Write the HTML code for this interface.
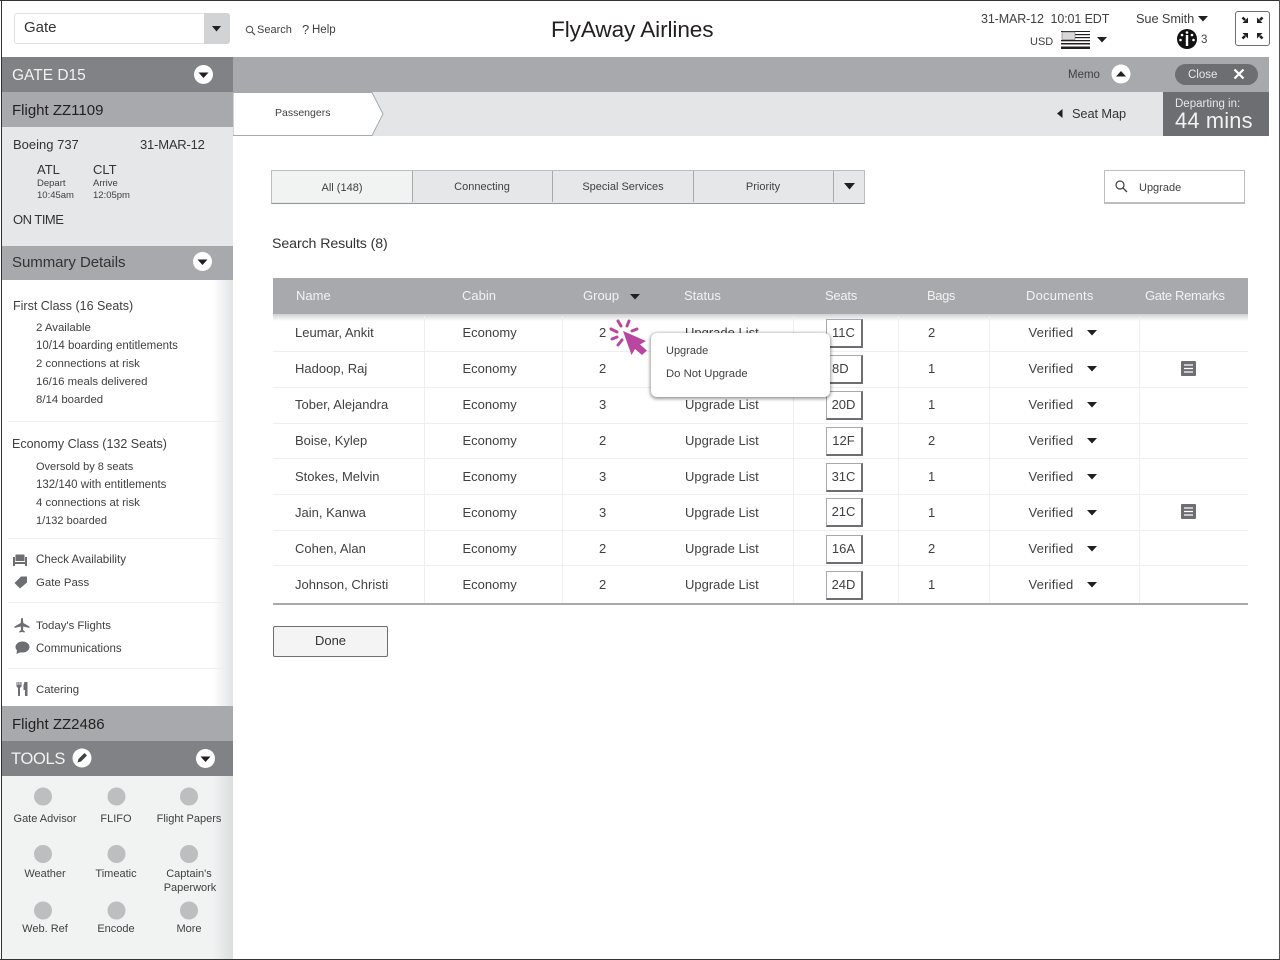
<!DOCTYPE html>
<html><head><meta charset="utf-8"><title>FlyAway Airlines</title>
<style>
html,body{margin:0;padding:0;background:#fff}
#p{position:relative;width:1280px;height:960px;overflow:hidden;background:#fff;font-family:"Liberation Sans",sans-serif;color:#414042;font-size:13px}
#p div,#p svg{position:absolute}
.t{white-space:nowrap;line-height:16px;height:16px}
.c{transform:translateX(-50%)}
.s{font-size:11px}
.m{font-size:11.400px}
.h{color:#f1f2f2;top:287.500px}
.l{background:#efeff0}
.b{width:34px;left:826px;height:26px;border:1px solid #a7a9ac;border-right:2px solid #6d6e71;border-bottom:2px solid #6d6e71;background:#fff;text-align:center;line-height:26px;text-indent:-1px}
</style></head><body><div id="p">
<!-- page backgrounds -->
<div style="left:2px;top:57px;width:231px;height:35px;background:#808285"></div>
<div style="left:2px;top:92px;width:231px;height:35px;background:#a7a9ac"></div>
<div style="left:2px;top:127px;width:231px;height:119px;background:#e6e7e8"></div>
<div style="left:2px;top:246px;width:231px;height:34px;background:#a7a9ac"></div>
<div style="left:213px;top:280px;width:20px;height:426px;background:linear-gradient(90deg,#fff,#e2e3e4)"></div>
<div style="left:2px;top:706px;width:231px;height:35px;background:#a7a9ac"></div>
<div style="left:2px;top:741px;width:231px;height:35px;background:#808285"></div>
<div style="left:2px;top:776px;width:231px;height:183px;background:#f1f2f2"></div>
<div style="left:213px;top:776px;width:20px;height:183px;background:linear-gradient(90deg,#f1f2f2,#dcddde)"></div>
<div style="left:233px;top:57px;width:1036px;height:35px;background:#a7a9ac"></div>
<div style="left:233px;top:92px;width:1036px;height:44px;background:#e4e5e6"></div>
<svg style="left:233px;top:92px" width="152" height="45"><path d="M0 .5H139L150 22 139 43.500H0Z" fill="#fff" stroke="#a7a9ac"/></svg>
<div style="left:1163px;top:92px;width:106px;height:44px;background:#6d6e71"></div>
<!-- page border -->
<div style="left:0;top:0;width:1280px;height:1px;background:#333"></div>
<div style="left:1px;top:0;width:1px;height:960px;background:#333"></div>
<div style="left:1279px;top:0;width:1px;height:960px;background:#555"></div>
<div style="left:0;top:959px;width:1280px;height:1px;background:#333"></div>

<!-- top bar -->
<div style="left:14px;top:13px;width:214px;height:29px;border:1px solid #e1e2e3;border-radius:3px;background:#fff"></div>
<div style="left:204px;top:13px;width:26px;height:31px;background:#d1d3d4;border-radius:0 3px 3px 0"></div>
<svg style="left:212px;top:26px" width="10" height="6"><path d="M0 0H9L4.500 5.500Z" fill="#231f20"/></svg>
<div class="t" style="left:24px;top:20px;font-size:15px;color:#333">Gate</div>
<svg style="left:245px;top:25px" width="11" height="11"><circle cx="4.500" cy="4.500" r="3.200" fill="none" stroke="#58595b" stroke-width="1.100"/><path d="M7 7L10 10" stroke="#58595b" stroke-width="1.300"/></svg>
<div class="t s" style="left:257px;top:22px">Search</div>
<div class="t" style="left:302px;top:22px;font-size:13px">?</div>
<div class="t" style="left:312px;top:22px;font-size:11.500px">Help</div>
<div class="t" style="left:551px;top:17.500px;font-size:22.600px;line-height:24px;height:24px;color:#231f20;letter-spacing:-.1px">FlyAway Airlines</div>
<div class="t" style="left:981px;top:11px;font-size:12.500px;letter-spacing:-.12px">31-MAR-12&nbsp; 10:01 EDT</div>
<div class="t" style="left:1136px;top:11px;font-size:12.800px;letter-spacing:-.1px">Sue Smith</div>
<svg style="left:1198px;top:16px" width="10" height="6"><path d="M0 0H10L5 5.500Z" fill="#231f20"/></svg>
<div class="t s" style="left:1030px;top:34px">USD</div>
<svg style="left:1061px;top:31px" width="29" height="18"><rect width="29" height="18" fill="#fff"/><g fill="#231f20"><rect y="0" width="29" height="1"/><rect x="14" y="3" width="15" height="1.200"/><rect x="14" y="6" width="15" height="1.200"/><rect y="9" width="29" height="1.300"/><rect y="12" width="29" height="1.500"/><rect y="15.500" width="29" height="2.500"/></g><rect x="1" y="1" width="13" height="7.500" fill="#d8d8d8" stroke="#777" stroke-width=".6"/></svg>
<svg style="left:1097px;top:37px" width="10" height="6"><path d="M0 0H10L5 5.500Z" fill="#231f20"/></svg>
<svg style="left:1177px;top:29px" width="20" height="20"><circle cx="10" cy="10" r="10" fill="#111"/><g fill="#fff"><rect x="8.800" y="6" width="2.400" height="11"/><circle cx="10" cy="3.500" r="1.300"/><circle cx="5" cy="6" r="1.300"/><circle cx="15" cy="6" r="1.300"/><circle cx="3.500" cy="11" r="1.300"/><circle cx="16.500" cy="11" r="1.300"/></g></svg>
<div class="t" style="left:1201px;top:32px;font-size:11.500px">3</div>
<div style="left:1235px;top:11px;width:33px;height:33px;border:1px solid #6d6e71;border-radius:3px;background:#fff"></div>
<svg style="left:1240px;top:15px" width="26" height="26" fill="#231f20" stroke="#231f20"><g stroke-width="2.500"><path d="M2.500 2.500L5 5M22.500 2.500L20 5M2.500 23.500L5 21M22.500 23.500L20 21"/></g><g stroke="none"><path d="M8 8H2.500L8 2.500Z"/><path d="M17 8H22.500L17 2.500Z"/><path d="M8 18H2.500L8 23.500Z"/><path d="M17 18H22.500L17 23.500Z"/></g></svg>

<!-- sidebar -->
<div class="t" style="left:12px;top:67.500px;font-size:15.500px;color:#f1f2f2">GATE D15</div>
<svg style="left:193px;top:64px" width="21" height="21"><circle cx="10.500" cy="10.500" r="9.500" fill="#fff"/><path d="M5.500 8.500H15.500L10.500 14Z" fill="#231f20"/></svg>
<div class="t" style="left:12px;top:102.500px;font-size:15px;color:#231f20">Flight ZZ1109</div>
<div class="t" style="left:13px;top:137px;color:#333">Boeing 737</div>
<div class="t" style="left:140px;top:137px;color:#333;letter-spacing:-.2px">31-MAR-12</div>
<div class="t" style="left:37px;top:162px;color:#333">ATL</div>
<div class="t" style="left:93px;top:162px;color:#333">CLT</div>
<div class="t" style="left:37px;top:176px;font-size:9.500px">Depart</div>
<div class="t" style="left:93px;top:176px;font-size:9.500px">Arrive</div>
<div class="t" style="left:37px;top:187.500px;font-size:9.500px">10:45am</div>
<div class="t" style="left:93px;top:187.500px;font-size:9.500px">12:05pm</div>
<div class="t" style="left:13px;top:211.500px;color:#333;letter-spacing:-.5px">ON TIME</div>
<div class="t" style="left:12px;top:254.500px;font-size:15px;color:#333;letter-spacing:-.05px">Summary Details</div>
<svg style="left:192px;top:251px" width="21" height="21"><circle cx="10.500" cy="10.500" r="9.500" fill="#fff"/><path d="M5.500 8.500H15.500L10.500 14Z" fill="#231f20"/></svg>

<div class="t" style="left:13px;top:297.500px;font-size:12.500px">First Class (16 Seats)</div>
<div class="t m" style="left:36px;top:319.500px">2 Available</div>
<div class="t m" style="left:36px;top:337.500px;font-size:11.500px">10/14 boarding entitlements</div>
<div class="t m" style="left:36px;top:355.500px">2 connections at risk</div>
<div class="t m" style="left:36px;top:373.500px">16/16 meals delivered</div>
<div class="t m" style="left:36px;top:391.500px">8/14 boarded</div>
<div class="l" style="left:8px;top:421px;width:216px;height:1px"></div>
<div class="t" style="left:12px;top:435.500px;font-size:12.500px">Economy Class (132 Seats)</div>
<div class="t s" style="left:36px;top:458.500px">Oversold by 8 seats</div>
<div class="t m" style="left:36px;top:476.500px;font-size:11.500px">132/140 with entitlements</div>
<div class="t m" style="left:36px;top:494.500px">4 connections at risk</div>
<div class="t s" style="left:36px;top:512.500px">1/132 boarded</div>
<div class="l" style="left:8px;top:538px;width:216px;height:1px"></div>
<svg style="left:12px;top:553px" width="16" height="14" fill="#6d6e71"><path d="M3.500 1.500H12.500V8H3.500Z"/><path d="M1 4H3V13H1Z"/><path d="M13 4H15V13H13Z"/><rect x="3" y="9" width="10" height="2"/></svg>
<div class="t" style="left:36px;top:551.500px;font-size:11.600px">Check Availability</div>
<svg style="left:13px;top:575px" width="15" height="14" fill="#6d6e71"><path d="M8 1.500H14V7.500L7 13.500 1.500 8Z"/></svg>
<div class="t m" style="left:36px;top:574.500px">Gate Pass</div>
<div class="l" style="left:8px;top:602px;width:216px;height:1px"></div>
<svg style="left:14px;top:617px" width="16" height="16" fill="#6d6e71"><path d="M7.200 1H8.800L9.300 6 15.500 9.500V11L9.300 9.500 9 13 10.800 14.500V15.500L8 15 5.200 15.500V14.500L7 13 6.700 9.500.5 11V9.500L6.700 6Z"/></svg>
<div class="t m" style="left:36px;top:617.500px">Today's Flights</div>
<svg style="left:15px;top:641px" width="15" height="14" fill="#6d6e71"><ellipse cx="7.500" cy="6" rx="7" ry="5.500"/><path d="M2 9L1.500 13 6 11Z"/></svg>
<div class="t" style="left:36px;top:640.500px;font-size:11.500px">Communications</div>
<div class="l" style="left:8px;top:668px;width:216px;height:1px"></div>
<svg style="left:16px;top:682px" width="13" height="14" fill="#6d6e71"><path d="M.5 0H1.500V3H2.300V0H3.500V3H4.300V0H5.500V4.500L4 6V14H2V6L.5 4.500Z"/><path d="M8.500 0H11.500V14H9V8H7.500V3Z"/></svg>
<div class="t m" style="left:36px;top:681.500px">Catering</div>

<div class="t" style="left:12px;top:716.500px;font-size:15px;color:#231f20">Flight ZZ2486</div>
<div class="t" style="left:11px;top:751px;font-size:16.500px;color:#f1f2f2;letter-spacing:-.3px">TOOLS</div>
<svg style="left:72px;top:748px" width="20" height="20"><circle cx="10" cy="10" r="9.500" fill="#fff"/><path d="M5.500 14.500L6.500 11 12.500 5 15 7.500 9 13.500Z" fill="#414042"/></svg>
<svg style="left:195px;top:748px" width="21" height="21"><circle cx="10.500" cy="10.500" r="9.500" fill="#fff"/><path d="M5.500 8.500H15.500L10.500 14Z" fill="#231f20"/></svg>

<svg style="left:30px;top:785px" width="175" height="140" fill="#bcbec0"><circle cx="13" cy="11.500" r="9"/><circle cx="86.500" cy="11.500" r="9"/><circle cx="159" cy="11.500" r="9"/><circle cx="13" cy="69" r="9"/><circle cx="86.500" cy="69" r="9"/><circle cx="159" cy="69" r="9"/><circle cx="13" cy="125.500" r="9"/><circle cx="86.500" cy="125.500" r="9"/><circle cx="159" cy="125.500" r="9"/></svg>
<div class="t s c" style="left:45px;top:811px">Gate Advisor</div>
<div class="t s c" style="left:116px;top:811px">FLIFO</div>
<div class="t s c" style="left:189px;top:811px">Flight Papers</div>
<div class="t s c" style="left:45px;top:866px">Weather</div>
<div class="t s c" style="left:116px;top:866px">Timeatic</div>
<div class="t s c" style="left:189px;top:866px">Captain's</div>
<div class="t s c" style="left:190px;top:880px">Paperwork</div>
<div class="t s c" style="left:45px;top:921px">Web. Ref</div>
<div class="t s c" style="left:116px;top:921px">Encode</div>
<div class="t s c" style="left:189px;top:921px">More</div>

<!-- top strip -->
<div class="t" style="left:1068px;top:67px;font-size:11.500px">Memo</div>
<svg style="left:1111px;top:64px" width="20" height="20"><circle cx="10" cy="10" r="9.500" fill="#fff"/><path d="M5 12.500H15L10 7Z" fill="#231f20"/></svg>
<div style="left:1175px;top:64px;width:83px;height:21px;border-radius:11px;background:#6d6e71"></div>
<div class="t" style="left:1188px;top:67px;font-size:11.500px;color:#e6e7e8">Close</div>
<svg style="left:1233px;top:68px" width="12" height="12"><path d="M1.500 1.500L10.500 10.500M10.500 1.500L1.500 10.500" stroke="#fff" stroke-width="2.200"/></svg>
<div class="t" style="left:275px;top:105px;font-size:10.500px">Passengers</div>
<svg style="left:1057px;top:109px" width="6" height="9"><path d="M5.500 0V9L0 4.500Z" fill="#231f20"/></svg>
<div class="t" style="left:1072px;top:105.500px;font-size:12.800px;color:#333;letter-spacing:-.1px">Seat Map</div>
<div class="t" style="left:1175px;top:95.500px;font-size:11.500px;color:#e6e7e8">Departing in:</div>
<div class="t" style="left:1175px;top:110px;font-size:21.800px;line-height:22px;height:22px;color:#f1f2f2;letter-spacing:.2px">44 mins</div>

<!-- filters -->
<div style="left:271px;top:170px;width:592px;height:32px;border:1px solid #bcbec0;border-bottom-color:#939598;background:#e6e7e8"></div>
<div style="left:272px;top:171px;width:140px;height:31px;background:#f1f2f2;border-right:1px solid #a7a9ac"></div>
<div style="left:552px;top:171px;width:1px;height:31px;background:#a7a9ac"></div>
<div style="left:693px;top:171px;width:1px;height:31px;background:#a7a9ac"></div>
<div style="left:833px;top:171px;width:1px;height:31px;background:#a7a9ac"></div>
<svg style="left:844px;top:183px" width="11" height="7"><path d="M0 0H11L5.500 6.500Z" fill="#231f20"/></svg>
<div class="t s c" style="left:342px;top:180px">All (148)</div>
<div class="t s c" style="left:482px;top:178.500px">Connecting</div>
<div class="t s c" style="left:623px;top:178.500px">Special Services</div>
<div class="t s c" style="left:763px;top:178.500px">Priority</div>
<div style="left:1104px;top:170px;width:139px;height:31px;border:1px solid #bcbec0;border-bottom-width:2px;background:#fff"></div>
<svg style="left:1115px;top:180px" width="13" height="13"><circle cx="5" cy="5" r="4" fill="none" stroke="#414042" stroke-width="1.200"/><path d="M8 8L12 12" stroke="#414042" stroke-width="1.300"/></svg>
<div class="t s" style="left:1139px;top:179.500px">Upgrade</div>
<div class="t" style="left:272px;top:235.500px;font-size:14.200px;color:#333;letter-spacing:-.1px">Search Results (8)</div>

<!-- table -->
<div style="left:273px;top:278px;width:975px;height:36px;background:#a7a9ac"></div>
<div style="left:273px;top:314px;width:975px;height:7px;background:linear-gradient(#cfd0d2,#fff)"></div>
<div class="t h" style="left:296px">Name</div>
<div class="t h" style="left:462px">Cabin</div>
<div class="t h" style="left:583px">Group</div>
<svg style="left:630px;top:294px" width="10" height="6"><path d="M0 0H10L5 5.500Z" fill="#231f20"/></svg>
<div class="t h" style="left:684px">Status</div>
<div class="t h" style="left:825px;letter-spacing:-.25px">Seats</div>
<div class="t h" style="left:927px;letter-spacing:-.4px">Bags</div>
<div class="t h" style="left:1026px;letter-spacing:.2px">Documents</div>
<div class="t h" style="left:1145px;letter-spacing:-.35px">Gate Remarks</div>

<div class="l" style="left:273px;top:351px;width:975px;height:1px"></div>
<div class="l" style="left:273px;top:387px;width:975px;height:1px"></div>
<div class="l" style="left:273px;top:423px;width:975px;height:1px"></div>
<div class="l" style="left:273px;top:458px;width:975px;height:1px"></div>
<div class="l" style="left:273px;top:494px;width:975px;height:1px"></div>
<div class="l" style="left:273px;top:530px;width:975px;height:1px"></div>
<div class="l" style="left:273px;top:565px;width:975px;height:1px"></div>
<div style="left:273px;top:603px;width:975px;height:2px;background:#a7a9ac"></div>
<div class="l" style="left:424px;top:316px;width:1px;height:287px"></div>
<div class="l" style="left:562px;top:316px;width:1px;height:287px"></div>
<div class="l" style="left:793px;top:316px;width:1px;height:287px"></div>
<div class="l" style="left:898px;top:316px;width:1px;height:287px"></div>
<div class="l" style="left:989px;top:316px;width:1px;height:287px"></div>
<div class="l" style="left:1139px;top:316px;width:1px;height:287px"></div>

<div class="t" style="left:295px;top:324.500px">Leumar, Ankit</div><div class="t" style="left:462.500px;top:324.500px">Economy</div><div class="t" style="left:599px;top:324.500px">2</div><div class="t" style="left:685px;top:324.500px">Upgrade List</div><div class="t" style="left:928px;top:324.500px">2</div><div class="t" style="left:1028.500px;top:324.500px;letter-spacing:.2px">Verified</div>
<div class="t" style="left:295px;top:360.500px">Hadoop, Raj</div><div class="t" style="left:462.500px;top:360.500px">Economy</div><div class="t" style="left:599px;top:360.500px">2</div><div class="t" style="left:928px;top:360.500px">1</div><div class="t" style="left:1028.500px;top:360.500px;letter-spacing:.2px">Verified</div>
<div class="t" style="left:295px;top:396.500px">Tober, Alejandra</div><div class="t" style="left:462.500px;top:396.500px">Economy</div><div class="t" style="left:599px;top:396.500px">3</div><div class="t" style="left:685px;top:396.500px">Upgrade List</div><div class="t" style="left:928px;top:396.500px">1</div><div class="t" style="left:1028.500px;top:396.500px;letter-spacing:.2px">Verified</div>
<div class="t" style="left:295px;top:432.500px">Boise, Kylep</div><div class="t" style="left:462.500px;top:432.500px">Economy</div><div class="t" style="left:599px;top:432.500px">2</div><div class="t" style="left:685px;top:432.500px">Upgrade List</div><div class="t" style="left:928px;top:432.500px">2</div><div class="t" style="left:1028.500px;top:432.500px;letter-spacing:.2px">Verified</div>
<div class="t" style="left:295px;top:468.500px">Stokes, Melvin</div><div class="t" style="left:462.500px;top:468.500px">Economy</div><div class="t" style="left:599px;top:468.500px">3</div><div class="t" style="left:685px;top:468.500px">Upgrade List</div><div class="t" style="left:928px;top:468.500px">1</div><div class="t" style="left:1028.500px;top:468.500px;letter-spacing:.2px">Verified</div>
<div class="t" style="left:295px;top:504.500px">Jain, Kanwa</div><div class="t" style="left:462.500px;top:504.500px">Economy</div><div class="t" style="left:599px;top:504.500px">3</div><div class="t" style="left:685px;top:504.500px">Upgrade List</div><div class="t" style="left:928px;top:504.500px">1</div><div class="t" style="left:1028.500px;top:504.500px;letter-spacing:.2px">Verified</div>
<div class="t" style="left:295px;top:540.500px">Cohen, Alan</div><div class="t" style="left:462.500px;top:540.500px">Economy</div><div class="t" style="left:599px;top:540.500px">2</div><div class="t" style="left:685px;top:540.500px">Upgrade List</div><div class="t" style="left:928px;top:540.500px">2</div><div class="t" style="left:1028.500px;top:540.500px;letter-spacing:.2px">Verified</div>
<div class="t" style="left:295px;top:576.500px">Johnson, Christi</div><div class="t" style="left:462.500px;top:576.500px">Economy</div><div class="t" style="left:599px;top:576.500px">2</div><div class="t" style="left:685px;top:576.500px">Upgrade List</div><div class="t" style="left:928px;top:576.500px">1</div><div class="t" style="left:1028.500px;top:576.500px;letter-spacing:.2px">Verified</div>

<svg style="left:1087px;top:329px" width="10" height="264" fill="#231f20"><path d="M0 1H10L5 6.500Z"/><path d="M0 37H10L5 42.500Z"/><path d="M0 73H10L5 78.500Z"/><path d="M0 109H10L5 114.500Z"/><path d="M0 145H10L5 150.500Z"/><path d="M0 181H10L5 186.500Z"/><path d="M0 217H10L5 222.500Z"/><path d="M0 253H10L5 258.500Z"/></svg>
<svg style="left:1181px;top:361px" width="15" height="15"><rect width="15" height="15" rx="1" fill="#6d6e71"/><path d="M3 4H12M3 7.500H12M3 11H12" stroke="#fff" stroke-width="1.300"/></svg>
<svg style="left:1181px;top:504px" width="15" height="15"><rect width="15" height="15" rx="1" fill="#6d6e71"/><path d="M3 4H12M3 7.500H12M3 11H12" stroke="#fff" stroke-width="1.300"/></svg>

<div class="b" style="top:319px">11C</div>
<div class="b" style="top:355px;text-align:left;text-indent:5px">8D</div>
<div class="b" style="top:391px">20D</div>
<div class="b" style="top:427px">12F</div>
<div class="b" style="top:463px">31C</div>
<div class="b" style="top:498px">21C</div>
<div class="b" style="top:535px">16A</div>
<div class="b" style="top:571px">24D</div>

<!-- popup -->
<div style="left:651px;top:333px;width:179px;height:64px;border-radius:6px;background:#fff;box-shadow:0 1px 3px 1px rgba(0,0,0,.4)"></div>
<div class="t s" style="left:666px;top:343px">Upgrade</div>
<div class="t" style="left:666px;top:366px;font-size:11.300px">Do Not Upgrade</div>
<svg style="left:608px;top:318px" width="42" height="38"><path d="M15 13L38 23 32 26.500 39 32.500 34 37 27 31 23.500 37Z" fill="#b9479f"/><g stroke="#b9479f" stroke-width="3" stroke-linecap="round"><path d="M10 3L13 8"/><path d="M21 3L19 8"/><path d="M29 11L24 13"/><path d="M3 11L9 14"/><path d="M4 21L9 19"/><path d="M10 27L14 22"/></g></svg>

<!-- done -->
<div style="left:273px;top:626px;width:113px;height:29px;border:1px solid #6d6e71;border-radius:2px;background:#f4f4f5;text-align:center;line-height:28px;color:#333">Done</div>
</div></body></html>
